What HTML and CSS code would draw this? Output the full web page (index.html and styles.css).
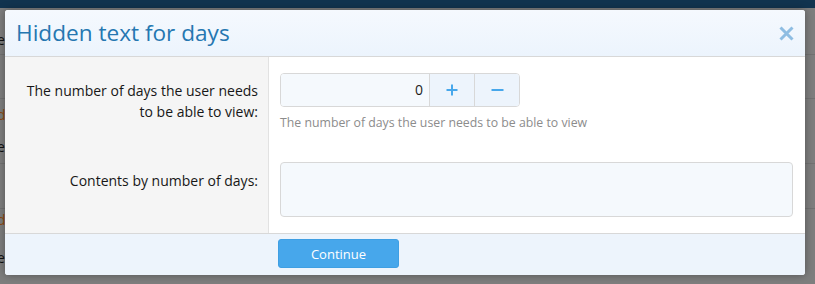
FILE: index.html
```html
<!DOCTYPE html>
<html>
<head>
<meta charset="utf-8">
<link rel="stylesheet" href="styles.css">
</head>
<body>
<div class="page">
  <div class="topbar"></div>
  <div class="bg-row r0"><span class="frag">e</span></div>
  <div class="bg-row r1"></div>
  <div class="bg-row r2"><span class="frag link">d</span><span class="frag">e</span></div>
  <div class="bg-row r3"></div>
  <div class="bg-row r4"><span class="frag link">d</span><span class="frag">e</span></div>
</div>

<div class="modal">
  <div class="modal-head">
    <h2 class="modal-title">Hidden text for days</h2>
    <span class="modal-close">
      <svg width="15" height="15" viewBox="0 0 15 15"><path d="M1.5 1.5 L13.5 13.5 M13.5 1.5 L1.5 13.5" stroke="#8ebde2" stroke-width="3" stroke-linecap="butt" fill="none"/></svg>
    </span>
  </div>
  <div class="modal-body">
    <div class="form-row row-days">
      <div class="form-label">The number of days the user needs<br>to be able to view:</div>
      <div class="form-input">
        <div class="spinbox">
          <div class="spin-value">0</div>
          <div class="spin-btn">
            <svg width="12" height="12" viewBox="0 0 12 12"><path d="M6 0.5 V11.5 M0.5 6 H11.5" stroke="#47a7eb" stroke-width="2" fill="none"/></svg>
          </div>
          <div class="spin-btn">
            <svg width="13" height="12" viewBox="0 0 13 12"><path d="M0.5 6 H12.5" stroke="#47a7eb" stroke-width="2" fill="none"/></svg>
          </div>
        </div>
        <div class="hint">The number of days the user needs to be able to view</div>
      </div>
    </div>
    <div class="form-row row-content">
      <div class="form-label">Contents by number of days:</div>
      <div class="form-input">
        <div class="textarea"></div>
      </div>
    </div>
  </div>
  <div class="modal-foot">
    <button class="btn-primary">Continue</button>
  </div>
</div>
</body>
</html>
```

FILE: styles.css
```css
html, body {
  margin: 0;
  padding: 0;
}
body {
  width: 815px;
  height: 284px;
  overflow: hidden;
  background: #7e7e7e;
  font-family: "Open Sans", "Noto Sans", sans-serif;
  position: relative;
}
.page {
  display: flex;
  flex-direction: column;
}
.topbar {
  height: 8px;
  background: #12344f;
}
.bg-row {
  border-bottom: 1px solid #727272;
  display: flex;
  flex-direction: column;
  align-items: flex-start;
  box-sizing: border-box;
  font-size: 14px;
  color: #111;
}
.bg-row.r0 { height: 47px; padding-top: 22px; }
.bg-row.r1 { height: 44px; }
.bg-row.r2 { height: 65px; padding-top: 6px; gap: 12px; }
.bg-row.r3 { height: 45px; }
.bg-row.r4 { height: 76px; padding-top: 1px; gap: 18px; border-bottom: 0; }
.frag {
  margin-left: -3px;
  line-height: 20px;
}
.frag.link { color: #8c4a12; }

.modal {
  position: absolute;
  left: 5px;
  top: 10px;
  width: 800px;
  height: 265px;
  background: #fff;
  border-radius: 3px;
  box-shadow: 0 0 8px rgba(0, 0, 0, 0.35);
  overflow: hidden;
  display: flex;
  flex-direction: column;
}
.modal-head {
  height: 46px;
  border-bottom: 1px solid #d8d8d8;
  background: linear-gradient(to bottom, #f5f9fe, #ecf4fd);
  display: flex;
  align-items: center;
  justify-content: space-between;
  padding: 0 11px 0 11px;
  flex-shrink: 0;
}
.modal-title {
  margin: 0;
  font-weight: 400;
  font-size: 22.6px;
  color: #2577b1;
  letter-spacing: 0;
  padding-bottom: 1px;
}
.modal-close {
  display: flex;
  margin-right: 0;
  margin-top: 1px;
}
.modal-body {
  flex: 1;
  display: flex;
  flex-direction: column;
  background: linear-gradient(to right, #f5f5f5 0, #f5f5f5 263px, #e2e2e2 263px, #e2e2e2 264px, #fff 264px);
}
.form-row {
  display: flex;
}
.form-label {
  width: 264px;
  box-sizing: border-box;
  padding-right: 11px;
  text-align: right;
  font-size: 14px;
  line-height: 21px;
  color: #171717;
}
.form-input {
  flex: 1;
  padding-left: 11px;
  padding-right: 12px;
}
.row-days { padding-top: 16px; }
.row-days .form-label { padding-top: 7px; }
.row-content { padding-top: 30px; }
.row-content .form-label { padding-top: 8px; }

.spinbox {
  display: flex;
  width: 238px;
  height: 32px;
  border: 1px solid #d8d8d8;
  border-radius: 4px;
  overflow: hidden;
}
.spin-value {
  flex: 1;
  background: #f5f9fd;
  text-align: right;
  padding-right: 6px;
  font-size: 14px;
  line-height: 32px;
  color: #1d1d1d;
}
.spin-btn {
  width: 44px;
  background: #edf4fc;
  border-left: 1px solid #d8d8d8;
  display: flex;
  align-items: center;
  justify-content: center;
}
.hint {
  margin-top: 7px;
  font-size: 12.3px;
  line-height: 18px;
  color: #8c8c8c;
}
.textarea {
  height: 53px;
  border: 1px solid #d8d8d8;
  border-radius: 4px;
  background: #f5f9fd;
}
.modal-foot {
  height: 36px;
  border-top: 1px solid #d8d8d8;
  background: #edf4fc;
  display: flex;
  align-items: flex-start;
  padding-left: 273px;
  padding-top: 5px;
  flex-shrink: 0;
}
.btn-primary {
  width: 121px;
  height: 29px;
  border: 1px solid #3f9fe3;
  border-radius: 3px;
  background: #47a7eb;
  color: #fff;
  font-family: "Open Sans", "Noto Sans", sans-serif;
  font-size: 13px;
  padding: 0;
}
```
